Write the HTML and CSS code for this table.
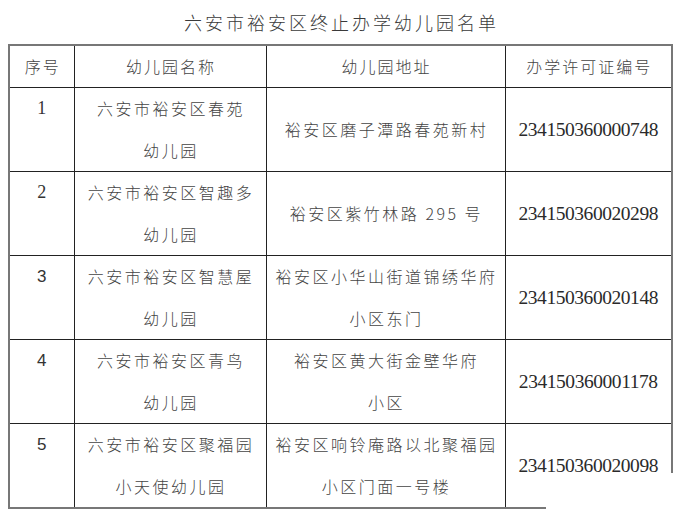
FILE: index.html
```html
<!DOCTYPE html>
<html lang="zh-CN">
<head>
<meta charset="utf-8">
<title>六安市裕安区终止办学幼儿园名单</title>
<link rel="stylesheet" href="styles.css">
</head>
<body>
<div class="page">
  <h1 class="title">六安市裕安区终止办学幼儿园名单</h1>
  <table class="list">
    <colgroup>
      <col class="c-no"><col class="c-name"><col class="c-addr"><col class="c-lic">
    </colgroup>
    <thead>
      <tr class="head">
        <th>序号</th><th>幼儿园名称</th><th>幼儿园地址</th><th>办学许可证编号</th>
      </tr>
    </thead>
    <tbody>
      <tr>
        <td class="no serif">1</td>
        <td>六安市裕安区春苑<br>幼儿园</td>
        <td>裕安区磨子潭路春苑新村</td>
        <td class="lic">234150360000748</td>
      </tr>
      <tr>
        <td class="no serif">2</td>
        <td>六安市裕安区智趣多<br>幼儿园</td>
        <td>裕安区紫竹林路 295 号</td>
        <td class="lic">234150360020298</td>
      </tr>
      <tr>
        <td class="no">3</td>
        <td>六安市裕安区智慧屋<br>幼儿园</td>
        <td>裕安区小华山街道锦绣华府<br>小区东门</td>
        <td class="lic">234150360020148</td>
      </tr>
      <tr>
        <td class="no">4</td>
        <td>六安市裕安区青鸟<br>幼儿园</td>
        <td>裕安区黄大街金壁华府<br>小区</td>
        <td class="lic">234150360001178</td>
      </tr>
      <tr>
        <td class="no">5</td>
        <td>六安市裕安区聚福园<br>小天使幼儿园</td>
        <td>裕安区响铃庵路以北聚福园<br>小区门面一号楼</td>
        <td class="lic">234150360020098</td>
      </tr>
    </tbody>
  </table>
  <div class="patch"></div>
</div>
</body>
</html>
```

FILE: styles.css
```css
html, body {
  margin: 0;
  padding: 0;
  background: #ffffff;
}

.page {
  position: relative;
  width: 680px;
  height: 519px;
  overflow: hidden;
  font-family: "Noto Sans CJK SC", "Noto Sans", sans-serif;
  color: #444444;
}

.title {
  margin: 0;
  height: 44px;
  line-height: 44px;
  padding-left: 3px;
  text-align: center;
  font-size: 18px;
  font-weight: 300;
  letter-spacing: 3px;
  color: #3a3a3a;
}

.list {
  margin-left: 8px;
  width: 663px;
  table-layout: fixed;
  border-collapse: collapse;
  border: 2px solid #777777;
}

.c-no { width: 65px; }
.c-name { width: 192px; }
.c-addr { width: 239px; }
.c-lic { width: 167px; }

.list th,
.list td {
  border: 1px solid #222222;
  padding: 0 0 0 2px;
  text-align: center;
  vertical-align: middle;
  font-weight: 300;
  font-size: 16px;
  letter-spacing: 2.5px;
  line-height: 41.5px;
}

.head th {
  height: 41px;
  line-height: 41px;
  letter-spacing: 2px;
}

.list td {
  height: 83px;
}

.list td.no {
  vertical-align: top;
  font-family: "Liberation Sans", Arial, sans-serif;
  font-weight: 400;
  font-size: 17px;
  letter-spacing: 0;
  padding-left: 0;
  color: #333333;
}

.list td.no.serif {
  font-family: "Liberation Serif", "DejaVu Serif", serif;
  font-size: 18px;
}

.list td.lic {
  font-family: "Liberation Serif", "DejaVu Serif", serif;
  font-weight: 400;
  font-size: 19.5px;
  letter-spacing: -0.45px;
  color: #2a2a2a;
  padding-left: 0;
}

.patch {
  position: absolute;
  left: 546px;
  top: 473px;
  width: 134px;
  height: 46px;
  background: #ffffff;
}
```
